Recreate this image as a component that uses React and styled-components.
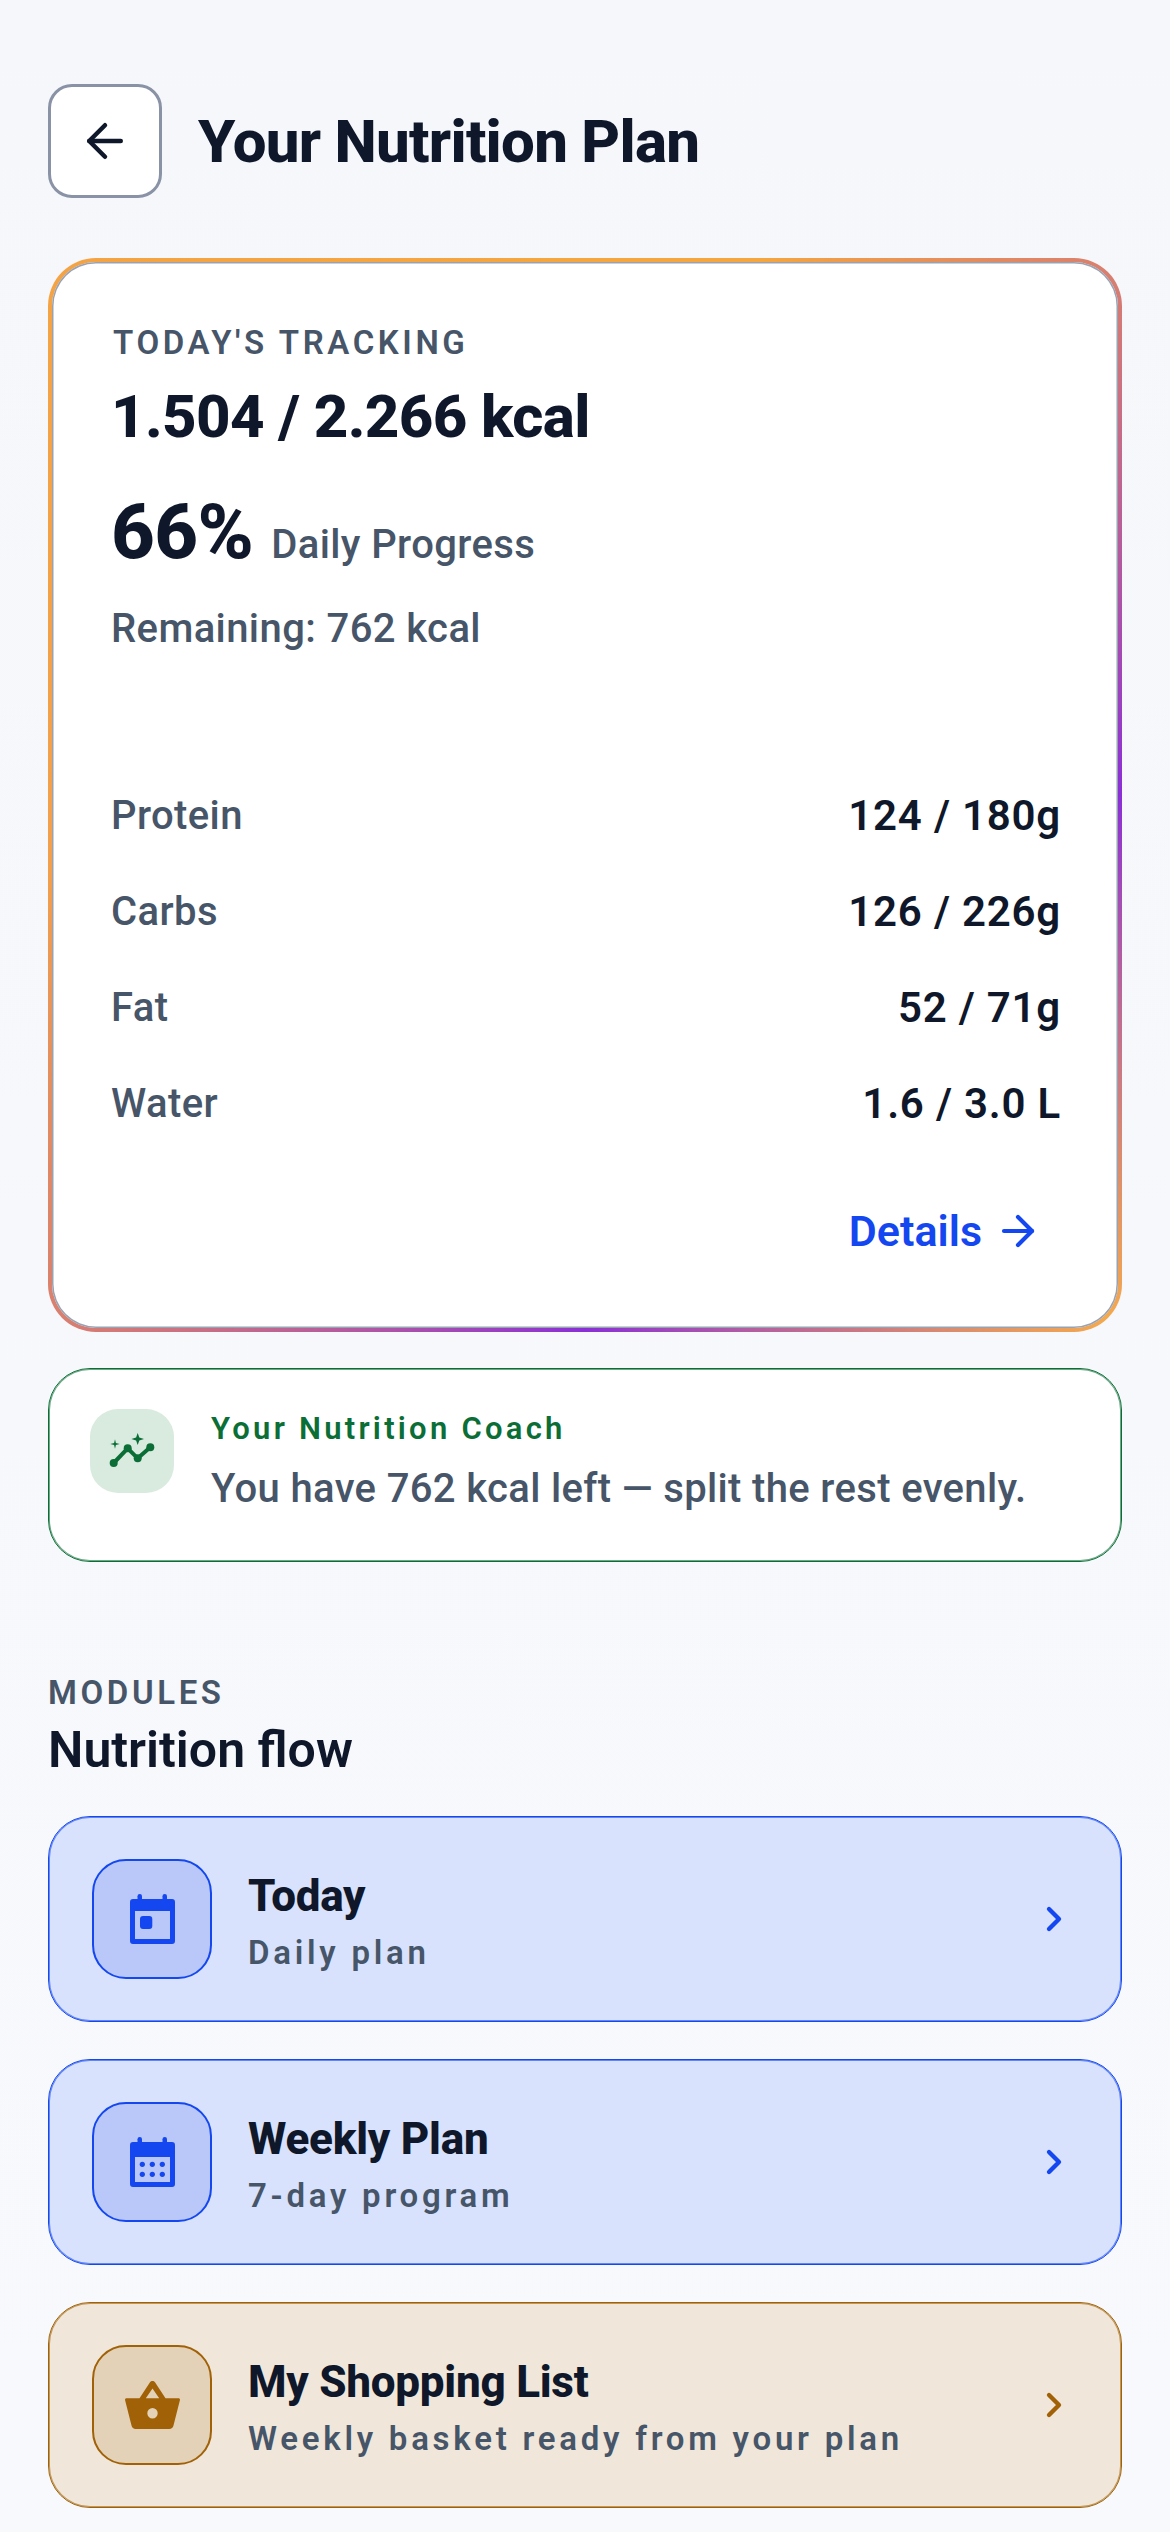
import React from 'react';
import styled, { createGlobalStyle } from 'styled-components';
import { ArrowLeft, ArrowRight, ChevronRight } from 'lucide-react';

const GlobalStyle = createGlobalStyle`
  * { box-sizing: border-box; }
  html, body { margin: 0; padding: 0; background: #f6f8fc; }
  body { font-family: Roboto, "Liberation Sans", sans-serif; color: #0f172a; }
`;

const Page = styled.div`
  width: 1170px;
  height: 2532px;
  overflow: hidden;
  padding: 84px 48px 0;
  background: linear-gradient(#f5f7fb, #f8f9fd);
`;

const Header = styled.header`
  display: flex;
  align-items: center;
  gap: 36px;
  margin-bottom: 60px;
`;

const BackButton = styled.button`
  width: 114px;
  height: 114px;
  display: flex;
  align-items: center;
  justify-content: center;
  background: #fff;
  border: 3px solid #8a93a5;
  border-radius: 24px;
  color: #0f172a;
  padding: 0;
`;

const Title = styled.h1`
  margin: 0;
  font-size: 60px;
  font-weight: 800;
  letter-spacing: -0.75px;
  color: #0f172a;
`;

const TrackCard = styled.section`
  height: 1074px;
  border: 4px solid transparent;
  border-radius: 48px;
  background:
    linear-gradient(#fff, #fff) padding-box,
    conic-gradient(#f6a63e 0deg, #f6a63e 18deg, #d97f6f 45deg, #8a2fd6 90deg, #f4a94e 135deg, #8a2fd6 180deg, #d97f6f 225deg, #f2a04c 262deg, #f6a63e 360deg) border-box;
  box-shadow: inset 0 0 0 1.5px #98a2b3;
  padding: 58px 57px 0 59px;
`;

const Eyebrow = styled.div`
  font-size: 33px;
  font-weight: 600;
  letter-spacing: 3.6px;
  color: #475569;
  line-height: 40px;
  margin: 3px 0 0 2px;
`;

const Kcal = styled.div`
  font-size: 60px;
  font-weight: 800;
  letter-spacing: -0.63px;
  line-height: 72px;
  margin-top: 18px;
  color: #0f172a;
`;

const ProgressRow = styled.div`
  display: flex;
  align-items: baseline;
  gap: 18px;
  margin-top: 34px;
`;

const Percent = styled.span`
  font-size: 76px;
  font-weight: 800;
  letter-spacing: -0.6px;
  line-height: 90px;
  color: #0f172a;
`;

const ProgressLabel = styled.span`
  font-size: 40px;
  font-weight: 500;
  letter-spacing: 0.4px;
  color: #475569;
`;

const Remaining = styled.div`
  font-size: 40px;
  font-weight: 500;
  letter-spacing: 0.4px;
  color: #475569;
  line-height: 46px;
  margin-top: 29px;
`;

const Macros = styled.div`
  display: flex;
  flex-direction: column;
  gap: 48px;
  margin-top: 139px;
`;

const MacroRow = styled.div`
  display: flex;
  justify-content: space-between;
  align-items: center;
  height: 48px;
`;

const MacroName = styled.span`
  font-size: 40px;
  font-weight: 500;
  letter-spacing: 0.4px;
  color: #475569;
`;

const MacroValue = styled.span`
  font-size: 42px;
  font-weight: 600;
  letter-spacing: 0.8px;
  color: #0f172a;
`;

const DetailsLink = styled.a`
  display: flex;
  justify-content: flex-end;
  align-items: center;
  gap: 12px;
  margin-top: 79px;
  padding-right: 19px;
  font-size: 43px;
  font-weight: 600;
  color: #1447f0;
`;

const CoachCard = styled.section`
  display: flex;
  align-items: flex-start;
  gap: 37px;
  margin-top: 36px;
  height: 194px;
  padding: 40px 41px;
  background: #fff;
  border: 1px solid #0b6e36;
  box-shadow: inset 0 0 0 1px #0b6e3699;
  border-radius: 42px;
`;

const CoachIcon = styled.div`
  width: 84px;
  height: 84px;
  flex: none;
  background: #d9eadf;
  border-radius: 28px;
`;

const CoachName = styled.div`
  font-size: 31px;
  font-weight: 600;
  letter-spacing: 3.25px;
  line-height: 36px;
  margin-top: 2px;
  color: #0b6e36;
`;

const CoachText = styled.div`
  font-size: 40px;
  font-weight: 500;
  letter-spacing: 0.35px;
  line-height: 48px;
  margin-top: 18px;
  color: #475569;
`;

const SectionHead = styled.div`
  margin-top: 112px;
  margin-bottom: 37px;
`;

const SectionLabel = styled.div`
  font-size: 33px;
  font-weight: 600;
  letter-spacing: 3.6px;
  line-height: 38px;
  color: #475569;
`;

const SectionTitle = styled.h2`
  margin: 9px 0 0;
  font-size: 50px;
  font-weight: 600;
  line-height: 58px;
  color: #0f172a;
`;

const ModuleList = styled.div`
  display: flex;
  flex-direction: column;
  gap: 37px;
`;

const ModuleCard = styled.div`
  display: flex;
  align-items: center;
  height: 206px;
  padding: 0 47px 0 43px;
  background: ${(p) => p.$bg};
  border: 1px solid ${(p) => p.$accent};
  box-shadow: inset 0 0 0 1px ${(p) => p.$accent}99;
  border-radius: 42px;
  color: ${(p) => p.$accent};
`;

const ModuleIcon = styled.div`
  width: 120px;
  height: 120px;
  flex: none;
  display: flex;
  align-items: center;
  justify-content: center;
  background: ${(p) => p.$bg};
  border: 2px solid ${(p) => p.$accent};
  border-radius: 34px;
`;

const ModuleText = styled.div`
  flex: 1;
  margin: 6px 0 0 36px;
`;

const ModuleTitle = styled.div`
  font-size: 44px;
  font-weight: 800;
  letter-spacing: -0.25px;
  line-height: 50px;
  color: #0f172a;
`;

const ModuleSub = styled.div`
  font-size: 33px;
  font-weight: 600;
  letter-spacing: 3.75px;
  line-height: 40px;
  margin-top: 12px;
  color: #475569;
`;

const macros = [
  { name: 'Protein', value: '124 / 180g' },
  { name: 'Carbs', value: '126 / 226g' },
  { name: 'Fat', value: '52 / 71g' },
  { name: 'Water', value: '1.6 / 3.0 L' },
];

const TodayIcon = () => (
  <svg width="45" height="50" viewBox="0 0 45 50" fill="currentColor">
    <rect x="7.500" y="0" width="4.500" height="9" rx="2.200" />
    <rect x="32.500" y="0" width="4.500" height="9" rx="2.200" />
    <path fillRule="evenodd" d="M3 5h39a3 3 0 0 1 3 3v39a3 3 0 0 1-3 3H3a3 3 0 0 1-3-3V8a3 3 0 0 1 3-3zM5 17v28h35V17z" />
    <rect x="10" y="22" width="12.300" height="13" rx="3" />
  </svg>
);

const WeekIcon = () => (
  <svg width="45" height="50" viewBox="0 0 45 50" fill="currentColor">
    <rect x="7.500" y="0" width="4.500" height="9" rx="2.200" />
    <rect x="32.500" y="0" width="4.500" height="9" rx="2.200" />
    <path fillRule="evenodd" d="M3 5h39a3 3 0 0 1 3 3v39a3 3 0 0 1-3 3H3a3 3 0 0 1-3-3V8a3 3 0 0 1 3-3zM5 20v25h35V20z" />
    {[12.3, 22.3, 32.3].map((x) => [27.3, 37.3].map((y) => <circle key={`${x}-${y}`} cx={x} cy={y} r="2.600" />))}
  </svg>
);

const BasketIcon = () => (
  <svg width="55" height="48" viewBox="0 0 55 48" fill="currentColor">
    <path fillRule="evenodd" d="M27.500 0c1 0 1.900.5 2.500 1.300L40.500 17.300H53.500c1 0 1.700.9 1.400 1.900L48.500 44.500c-.5 2-2 3.500-4.200 3.500H10.700c-2.200 0-3.700-1.500-4.200-3.500L.1 19.200c-.3-1 .4-1.900 1.400-1.900H14.500L25 1.300C25.600.5 26.500 0 27.500 0zM27.500 7.500 20.800 17.300h13.400zM27.500 27a5.200 5.200 0 1 0 0 10.400 5.200 5.200 0 0 0 0-10.400z" />
  </svg>
);

const InsightIcon = () => (
  <svg width="84" height="84" viewBox="0 0 84 84" fill="#0b6e36">
    <path d="M23.700 54 37.700 39.300 47.700 49.300 60.300 38.300" fill="none" stroke="#0b6e36" strokeWidth="4" />
    <circle cx="23.700" cy="54" r="4" />
    <circle cx="37.700" cy="39.300" r="4" />
    <circle cx="47.700" cy="49.300" r="4" />
    <circle cx="60.300" cy="38.300" r="4" />
    <path d="M47.700 24l1.600 4.400 4.700 1.600-4.700 1.600-1.600 4.400-1.600-4.400-4.700-1.600 4.700-1.600z" />
    <path d="M25 30.300l.9 3.800 3.800.9-3.800.9-.9 3.800-.9-3.800-3.800-.9 3.800-.9z" />
  </svg>
);

export default function App() {
  return (
    <Page>
      <GlobalStyle />
      <Header>
        <BackButton aria-label="Back">
          <ArrowLeft size={54} strokeWidth={2} />
        </BackButton>
        <Title>Your Nutrition Plan</Title>
      </Header>

      <TrackCard>
        <Eyebrow>TODAY'S TRACKING</Eyebrow>
        <Kcal>1.504 / 2.266 kcal</Kcal>
        <ProgressRow>
          <Percent>66%</Percent>
          <ProgressLabel>Daily Progress</ProgressLabel>
        </ProgressRow>
        <Remaining>Remaining: 762 kcal</Remaining>
        <Macros>
          {macros.map((m) => (
            <MacroRow key={m.name}>
              <MacroName>{m.name}</MacroName>
              <MacroValue>{m.value}</MacroValue>
            </MacroRow>
          ))}
        </Macros>
        <DetailsLink>
          Details <ArrowRight size={48} strokeWidth={2.1} />
        </DetailsLink>
      </TrackCard>

      <CoachCard>
        <CoachIcon><InsightIcon /></CoachIcon>
        <div>
          <CoachName>Your Nutrition Coach</CoachName>
          <CoachText>You have 762 kcal left — split the rest evenly.</CoachText>
        </div>
      </CoachCard>

      <SectionHead>
        <SectionLabel>MODULES</SectionLabel>
        <SectionTitle>Nutrition flow</SectionTitle>
      </SectionHead>

      <ModuleList>
        <ModuleCard $bg="#d8e2fc" $accent="#1447f0">
          <ModuleIcon $bg="#b9c8f9" $accent="#1447f0"><TodayIcon /></ModuleIcon>
          <ModuleText>
            <ModuleTitle>Today</ModuleTitle>
            <ModuleSub>Daily plan</ModuleSub>
          </ModuleText>
          <ChevronRight size={40} strokeWidth={2.6} />
        </ModuleCard>
        <ModuleCard $bg="#d8e2fc" $accent="#1447f0">
          <ModuleIcon $bg="#b9c8f9" $accent="#1447f0"><WeekIcon /></ModuleIcon>
          <ModuleText>
            <ModuleTitle>Weekly Plan</ModuleTitle>
            <ModuleSub>7-day program</ModuleSub>
          </ModuleText>
          <ChevronRight size={40} strokeWidth={2.6} />
        </ModuleCard>
        <ModuleCard $bg="#f0e7da" $accent="#a16207">
          <ModuleIcon $bg="#e3d2b8" $accent="#a16207"><BasketIcon /></ModuleIcon>
          <ModuleText>
            <ModuleTitle>My Shopping List</ModuleTitle>
            <ModuleSub>Weekly basket ready from your plan</ModuleSub>
          </ModuleText>
          <ChevronRight size={40} strokeWidth={2.6} />
        </ModuleCard>
      </ModuleList>
    </Page>
  );
}
